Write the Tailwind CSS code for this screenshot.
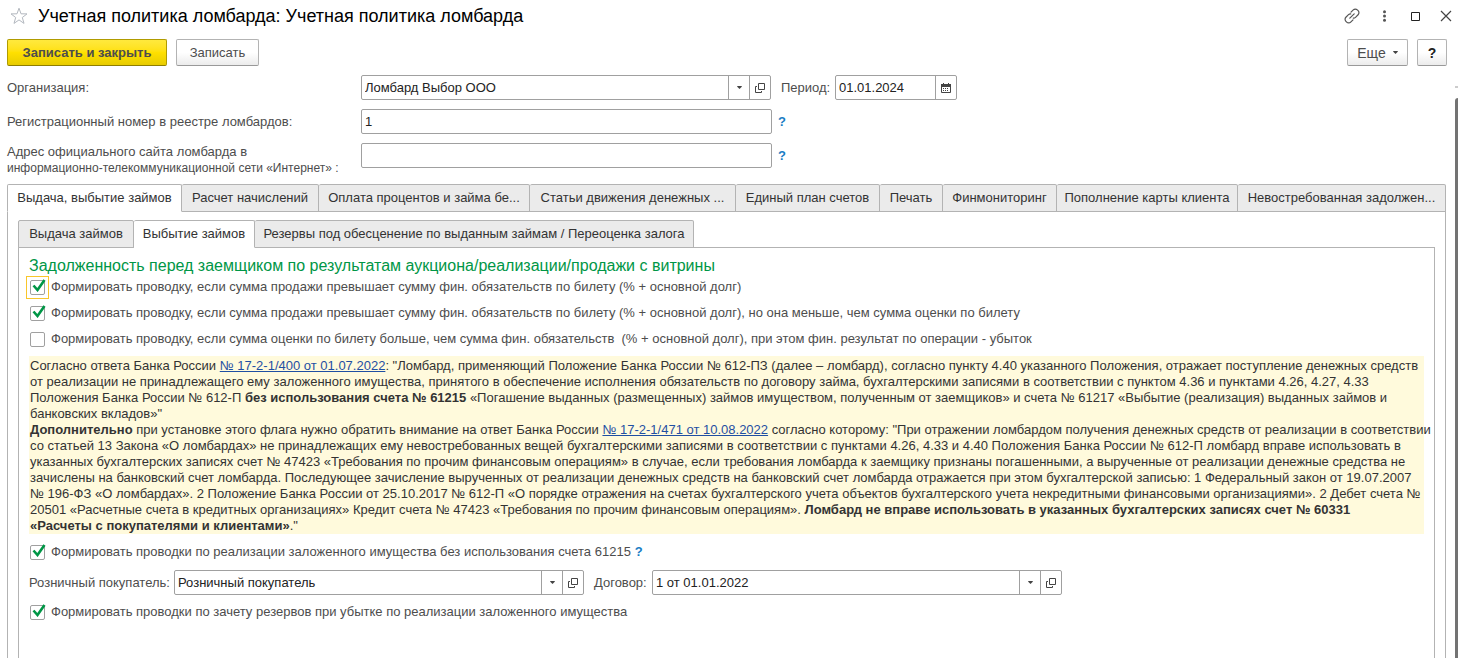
<!DOCTYPE html>
<html lang="ru">
<head>
<meta charset="utf-8">
<title>Учетная политика ломбарда</title>
<script src="https://cdn.jsdelivr.net/npm/@tailwindcss/browser@4"></script>
</head>
<body class="bg-white font-['Liberation_Sans',Arial,sans-serif] text-[13px] leading-4 text-[#4d4d4d]">
<svg class="hidden" aria-hidden="true">
  <symbol id="open" viewBox="0 0 10 10"><path d="M3.5 .5h6v6h-6zM2 3.500H.5v6h6V8" fill="none" stroke="#444" stroke-width="1"/></symbol>
  <symbol id="down" viewBox="0 0 6 4"><path d="M0 0h6v1L3 4 0 1z" fill="#444"/></symbol>
  <symbol id="check" viewBox="0 0 14 13"><path d="M1.500 6.500l4 4.500L12.500 1" fill="none" stroke="#009646" stroke-width="2.600"/></symbol>
</svg>
<div class="flex min-h-screen">
<main class="flex min-w-0 flex-1 flex-col pl-[7px] pr-2">
  <header class="-mr-[5px] flex h-8 items-center">
    <button type="button" aria-label="Избранное" class="ml-[3px]"><svg class="size-[18px]" viewBox="0 0 18 18"><path d="M9 1.200l2 5.600 6 .1-4.700 3.600 1.700 5.900L9 12.900l-5 3.500 1.700-5.900L1 6.900l6-.1z" fill="none" stroke="#b3b8bf"/></svg></button>
    <h1 class="ml-2.5 flex-1 text-lg leading-6 text-black">Учетная политика ломбарда: Учетная политика ломбарда</h1>
    <div class="flex items-center">
      <button type="button" aria-label="Ссылка" class="mr-[22px]"><svg class="size-4" viewBox="0 0 16 16" fill="none" stroke="#555" stroke-width="1.200" stroke-linecap="round"><path d="M7 4.200l2.300-2.300a2.800 2.800 0 0 1 4 0l.8.800a2.800 2.800 0 0 1 0 4L11.500 9.300a2.800 2.800 0 0 1-2.200.8"/><path d="M9 11.800l-2.300 2.300a2.800 2.800 0 0 1-4 0l-.8-.8a2.800 2.800 0 0 1 0-4L4.500 6.700a2.800 2.800 0 0 1 2.200-.8"/><path d="M5.800 10.200l4.400-4.400"/></svg></button>
      <button type="button" aria-label="Меню" class="mr-6"><svg class="h-3 w-[5px]" viewBox="0 0 5 12" fill="#555"><circle cx="2.500" cy="1.800" r="1.500"/><circle cx="2.500" cy="6" r="1.500"/><circle cx="2.500" cy="10.200" r="1.500"/></svg></button>
      <button type="button" aria-label="Развернуть" class="mr-5"><svg class="size-[9px]" viewBox="0 0 9 9"><path d="M.5.500h8v8h-8z" fill="none" stroke="#222"/></svg></button>
      <button type="button" aria-label="Закрыть"><svg class="size-3" viewBox="0 0 12 12"><path d="M1 1l10 10M11 1L1 11" stroke="#444" stroke-width="1.200"/></svg></button>
    </div>
  </header>

  <div class="mt-[7px] flex gap-[9px]">
    <button type="button" class="h-[27px] w-40 rounded-xs border border-[#b09b00] border-b-[#8f7e00] bg-linear-to-b from-[#ffe93d] via-[#ffe000] to-[#e8cc00] font-bold">Записать и закрыть</button>
    <button type="button" class="h-[27px] w-[83px] rounded-xs border border-[#b3b3b3] border-b-[#999] bg-linear-to-b from-white via-white to-[#ececec]">Записать</button>
    <div class="flex-1"></div>
    <button type="button" class="flex h-[27px] w-[61px] items-center justify-center gap-[7px] rounded-xs border border-[#b3b3b3] border-b-[#999] bg-linear-to-b from-white via-white to-[#ececec] text-sm">Еще<svg class="h-[3px] w-[5px]"><use href="#down"/></svg></button>
    <button type="button" aria-label="Справка" class="h-[27px] w-[30px] rounded-xs border border-[#b3b3b3] border-b-[#999] bg-linear-to-b from-white via-white to-[#ececec] text-sm font-bold text-[#222]">?</button>
  </div>

  <form class="mt-[9px] grid grid-cols-[354px_1fr] grid-rows-[25px_25px_25px] items-center gap-y-[9px]">
    <label for="org">Организация:</label>
    <div class="flex items-center">
      <div class="flex h-[25px] w-[410px] rounded-xs border border-[#a0a0a0] text-[#222]">
        <select id="org" class="min-w-0 flex-1 appearance-none px-[3px]"><option>Ломбард Выбор ООО</option></select>
        <span class="pointer-events-none flex w-[21px] items-center justify-center border-l border-[#a0a0a0]"><svg class="h-[3px] w-[5px]"><use href="#down"/></svg></span>
        <button type="button" aria-label="Открыть" class="flex w-[21px] items-center justify-center border-l border-[#a0a0a0]"><svg class="size-2.5"><use href="#open"/></svg></button>
      </div>
      <label for="period" class="ml-2.5 w-[54px]">Период:</label>
      <div class="flex h-[25px] w-[122px] rounded-xs border border-[#a0a0a0] text-[#222]">
        <input id="period" value="01.01.2024" class="min-w-0 flex-1 px-[3px]">
        <button type="button" aria-label="Календарь" class="flex w-[21px] items-center justify-center border-l border-[#a0a0a0]"><svg class="size-2.5" viewBox="0 0 10 10"><path d="M.5 2h9v7.500h-9z" fill="none" stroke="#444"/><path d="M0 1h10v3H0zM2 0h1v1H2zM7 0h1v1H7z" fill="#444"/><path d="M2 5.500h6M2 7.500h6" stroke="#444" stroke-dasharray="1 1"/></svg></button>
      </div>
    </div>
    <label for="reg">Регистрационный номер в реестре ломбардов:</label>
    <div class="flex items-center gap-1.5">
      <input id="reg" value="1" class="h-[25px] w-[411px] rounded-xs border border-[#a0a0a0] px-[3px] text-[#222]">
      <button type="button" class="font-bold leading-4 text-[#1a7dc4]">?</button>
    </div>
    <label for="site" class="-mb-2 whitespace-nowrap">Адрес официального сайта ломбарда в<br><span class="text-xs leading-4">информационно-телекоммуникационной сети «Интернет» :</span></label>
    <div class="flex items-center gap-1.5">
      <input id="site" class="h-[25px] w-[411px] rounded-xs border border-[#a0a0a0] px-[3px] text-[#222]">
      <button type="button" class="font-bold leading-4 text-[#1a7dc4]">?</button>
    </div>
  </form>

  <section class="mt-4 flex flex-1 flex-col pr-px">
    <div role="tablist" class="relative z-10 -mb-px grid h-7 grid-cols-[175fr_137fr_211fr_206fr_144fr_63fr_114fr_181fr_208fr] whitespace-nowrap text-[#333]">
      <button role="tab" aria-selected="true" class="rounded-t-xs border border-b-white border-[#b3b3b3] bg-white">Выдача, выбытие займов</button>
      <button role="tab" class="rounded-t-xs border border-l-0 border-[#b3b3b3] bg-[#ebebeb]">Расчет начислений</button>
      <button role="tab" class="rounded-t-xs border border-l-0 border-[#b3b3b3] bg-[#ebebeb]">Оплата процентов и займа бе...</button>
      <button role="tab" class="rounded-t-xs border border-l-0 border-[#b3b3b3] bg-[#ebebeb]">Статьи движения денежных ...</button>
      <button role="tab" class="rounded-t-xs border border-l-0 border-[#b3b3b3] bg-[#ebebeb]">Единый план счетов</button>
      <button role="tab" class="rounded-t-xs border border-l-0 border-[#b3b3b3] bg-[#ebebeb]">Печать</button>
      <button role="tab" class="rounded-t-xs border border-l-0 border-[#b3b3b3] bg-[#ebebeb]">Финмониторинг</button>
      <button role="tab" class="rounded-t-xs border border-l-0 border-[#b3b3b3] bg-[#ebebeb]">Пополнение карты клиента</button>
      <button role="tab" class="rounded-t-xs border border-l-0 border-[#b3b3b3] bg-[#ebebeb]">Невостребованная задолжен...</button>
    </div>
    <div class="flex flex-1 flex-col border border-b-0 border-[#b3b3b3] px-2.5 pt-2">
      <div role="tablist" class="relative z-10 -mb-px flex h-7 whitespace-nowrap text-[#333]">
        <button role="tab" class="w-[116px] rounded-t-xs border border-[#b3b3b3] bg-[#ebebeb]">Выдача займов</button>
        <button role="tab" aria-selected="true" class="w-[121px] rounded-t-xs border border-l-0 border-[#b3b3b3] border-b-white bg-white">Выбытие займов</button>
        <button role="tab" class="w-[439px] rounded-t-xs border border-l-0 border-[#b3b3b3] bg-[#ebebeb]">Резервы под обесценение по выданным займам / Переоценка залога</button>
      </div>
      <div class="flex-1 border border-b-0 border-[#b3b3b3] px-2.5 pt-2">
        <h2 class="text-base leading-5 text-[#009646]">Задолженность перед заемщиком по результатам аукциона/реализации/продажи с витрины</h2>
        <div class="flex h-[22px] items-center">
          <span class="relative ml-px mr-1.5 flex size-[15px] shrink-0 outline outline-offset-3 outline-[#f9c62b]"><input id="c1" type="checkbox" checked class="peer size-[15px] appearance-none rounded-xs border border-[#a0a0a0]"><svg class="pointer-events-none invisible absolute -top-px left-0.5 h-[13px] w-3.5 peer-checked:visible"><use href="#check"/></svg></span>
          <label for="c1">Формировать проводку, если сумма продажи превышает сумму фин. обязательств по билету (% + основной долг)</label>
        </div>
        <div class="mt-1 flex h-[22px] items-center">
          <span class="relative ml-px mr-1.5 flex size-[15px] shrink-0"><input id="c2" type="checkbox" checked class="peer size-[15px] appearance-none rounded-xs border border-[#a0a0a0]"><svg class="pointer-events-none invisible absolute -top-px left-0.5 h-[13px] w-3.5 peer-checked:visible"><use href="#check"/></svg></span>
          <label for="c2">Формировать проводку, если сумма продажи превышает сумму фин. обязательств по билету (% + основной долг), но она меньше, чем сумма оценки по билету</label>
        </div>
        <div class="mt-1 flex h-[22px] items-center">
          <span class="relative ml-px mr-1.5 flex size-[15px] shrink-0"><input id="c3" type="checkbox" class="peer size-[15px] appearance-none rounded-xs border border-[#a0a0a0]"><svg class="pointer-events-none invisible absolute -top-px left-0.5 h-[13px] w-3.5 peer-checked:visible"><use href="#check"/></svg></span>
          <label for="c3" class="whitespace-pre-wrap">Формировать проводку, если сумма оценки по билету больше, чем сумма фин. обязательств  (% + основной долг), при этом фин. результат по операции - убыток</label>
        </div>
        <div class="mt-1.5 whitespace-nowrap bg-[#fffadc] pl-px pt-0.5 text-[#333]">
          <p>Согласно ответа Банка России <a href="#" class="text-[#1f4fa3] underline">№ 17-2-1/400 от 01.07.2022</a>: "Ломбард, применяющий Положение Банка России № 612-ПЗ (далее – ломбард), согласно пункту 4.40 указанного Положения, отражает поступление денежных средств<br>от реализации не принадлежащего ему заложенного имущества, принятого в обеспечение исполнения обязательств по договору займа, бухгалтерскими записями в соответствии с пунктом 4.36 и пунктами 4.26, 4.27, 4.33<br>Положения Банка России № 612-П <b>без использования счета № 61215</b> «Погашение выданных (размещенных) займов имуществом, полученным от заемщиков» и счета № 61217 «Выбытие (реализация) выданных займов и<br>банковских вкладов»"</p>
          <p><b>Дополнительно</b> при установке этого флага нужно обратить внимание на ответ Банка России <a href="#" class="text-[#1f4fa3] underline">№ 17-2-1/471 от 10.08.2022</a> согласно которому: "При отражении ломбардом получения денежных средств от реализации в соответствии<br>со статьей 13 Закона «О ломбардах» не принадлежащих ему невостребованных вещей бухгалтерскими записями в соответствии с пунктами 4.26, 4.33 и 4.40 Положения Банка России № 612-П ломбард вправе использовать в<br>указанных бухгалтерских записях счет № 47423 «Требования по прочим финансовым операциям» в случае, если требования ломбарда к заемщику признаны погашенными, а вырученные от реализации денежные средства не<br>зачислены на банковский счет ломбарда. Последующее зачисление вырученных от реализации денежных средств на банковский счет ломбарда отражается при этом бухгалтерской записью: 1 Федеральный закон от 19.07.2007<br>№ 196-ФЗ «О ломбардах». 2 Положение Банка России от 25.10.2017 № 612-П «О порядке отражения на счетах бухгалтерского учета объектов бухгалтерского учета некредитными финансовыми организациями». 2 Дебет счета №<br>20501 «Расчетные счета в кредитных организациях» Кредит счета № 47423 «Требования по прочим финансовым операциям». <b>Ломбард не вправе использовать в указанных бухгалтерских записях счет № 60331<br>«Расчеты с покупателями и клиентами»</b>."</p>
        </div>
        <div class="mt-[7px] flex h-[22px] items-center">
          <span class="relative ml-px mr-1.5 flex size-[15px] shrink-0"><input id="c4" type="checkbox" checked class="peer size-[15px] appearance-none rounded-xs border border-[#a0a0a0]"><svg class="pointer-events-none invisible absolute -top-px left-0.5 h-[13px] w-3.5 peer-checked:visible"><use href="#check"/></svg></span>
          <label for="c4">Формировать проводки по реализации заложенного имущества без использования счета 61215</label>
          <button type="button" class="ml-1 font-bold leading-4 text-[#1a7dc4]">?</button>
        </div>
        <div class="mt-[7px] flex items-center">
          <label for="buyer" class="w-[145px]">Розничный покупатель:</label>
          <div class="flex h-[25px] w-[410px] rounded-xs border border-[#a0a0a0] text-[#222]">
            <select id="buyer" class="min-w-0 flex-1 appearance-none px-[3px]"><option>Розничный покупатель</option></select>
            <span class="pointer-events-none flex w-[21px] items-center justify-center border-l border-[#a0a0a0]"><svg class="h-[3px] w-[5px]"><use href="#down"/></svg></span>
            <button type="button" aria-label="Открыть" class="flex w-[21px] items-center justify-center border-l border-[#a0a0a0]"><svg class="size-2.5"><use href="#open"/></svg></button>
          </div>
          <label for="deal" class="ml-2.5 w-[58px]">Договор:</label>
          <div class="flex h-[25px] w-[410px] rounded-xs border border-[#a0a0a0] text-[#222]">
            <select id="deal" class="min-w-0 flex-1 appearance-none px-[3px]"><option>1 от 01.01.2022</option></select>
            <span class="pointer-events-none flex w-[21px] items-center justify-center border-l border-[#a0a0a0]"><svg class="h-[3px] w-[5px]"><use href="#down"/></svg></span>
            <button type="button" aria-label="Открыть" class="flex w-[21px] items-center justify-center border-l border-[#a0a0a0]"><svg class="size-2.5"><use href="#open"/></svg></button>
          </div>
        </div>
        <div class="mt-1.5 flex h-[22px] items-center">
          <span class="relative ml-px mr-1.5 flex size-[15px] shrink-0"><input id="c5" type="checkbox" checked class="peer size-[15px] appearance-none rounded-xs border border-[#a0a0a0]"><svg class="pointer-events-none invisible absolute -top-px left-0.5 h-[13px] w-3.5 peer-checked:visible"><use href="#check"/></svg></span>
          <label for="c5">Формировать проводки по зачету резервов при убытке по реализации заложенного имущества</label>
        </div>
      </div>
    </div>
  </section>
</main>
<div aria-hidden="true" class="flex w-[3px] flex-col pt-[86px]">
  <div class="h-[2px] bg-[#ccc]"></div>
  <div class="mt-[10px] flex-1 rounded-tl-sm bg-[#737373]"></div>
</div>
</div>
</body>
</html>
